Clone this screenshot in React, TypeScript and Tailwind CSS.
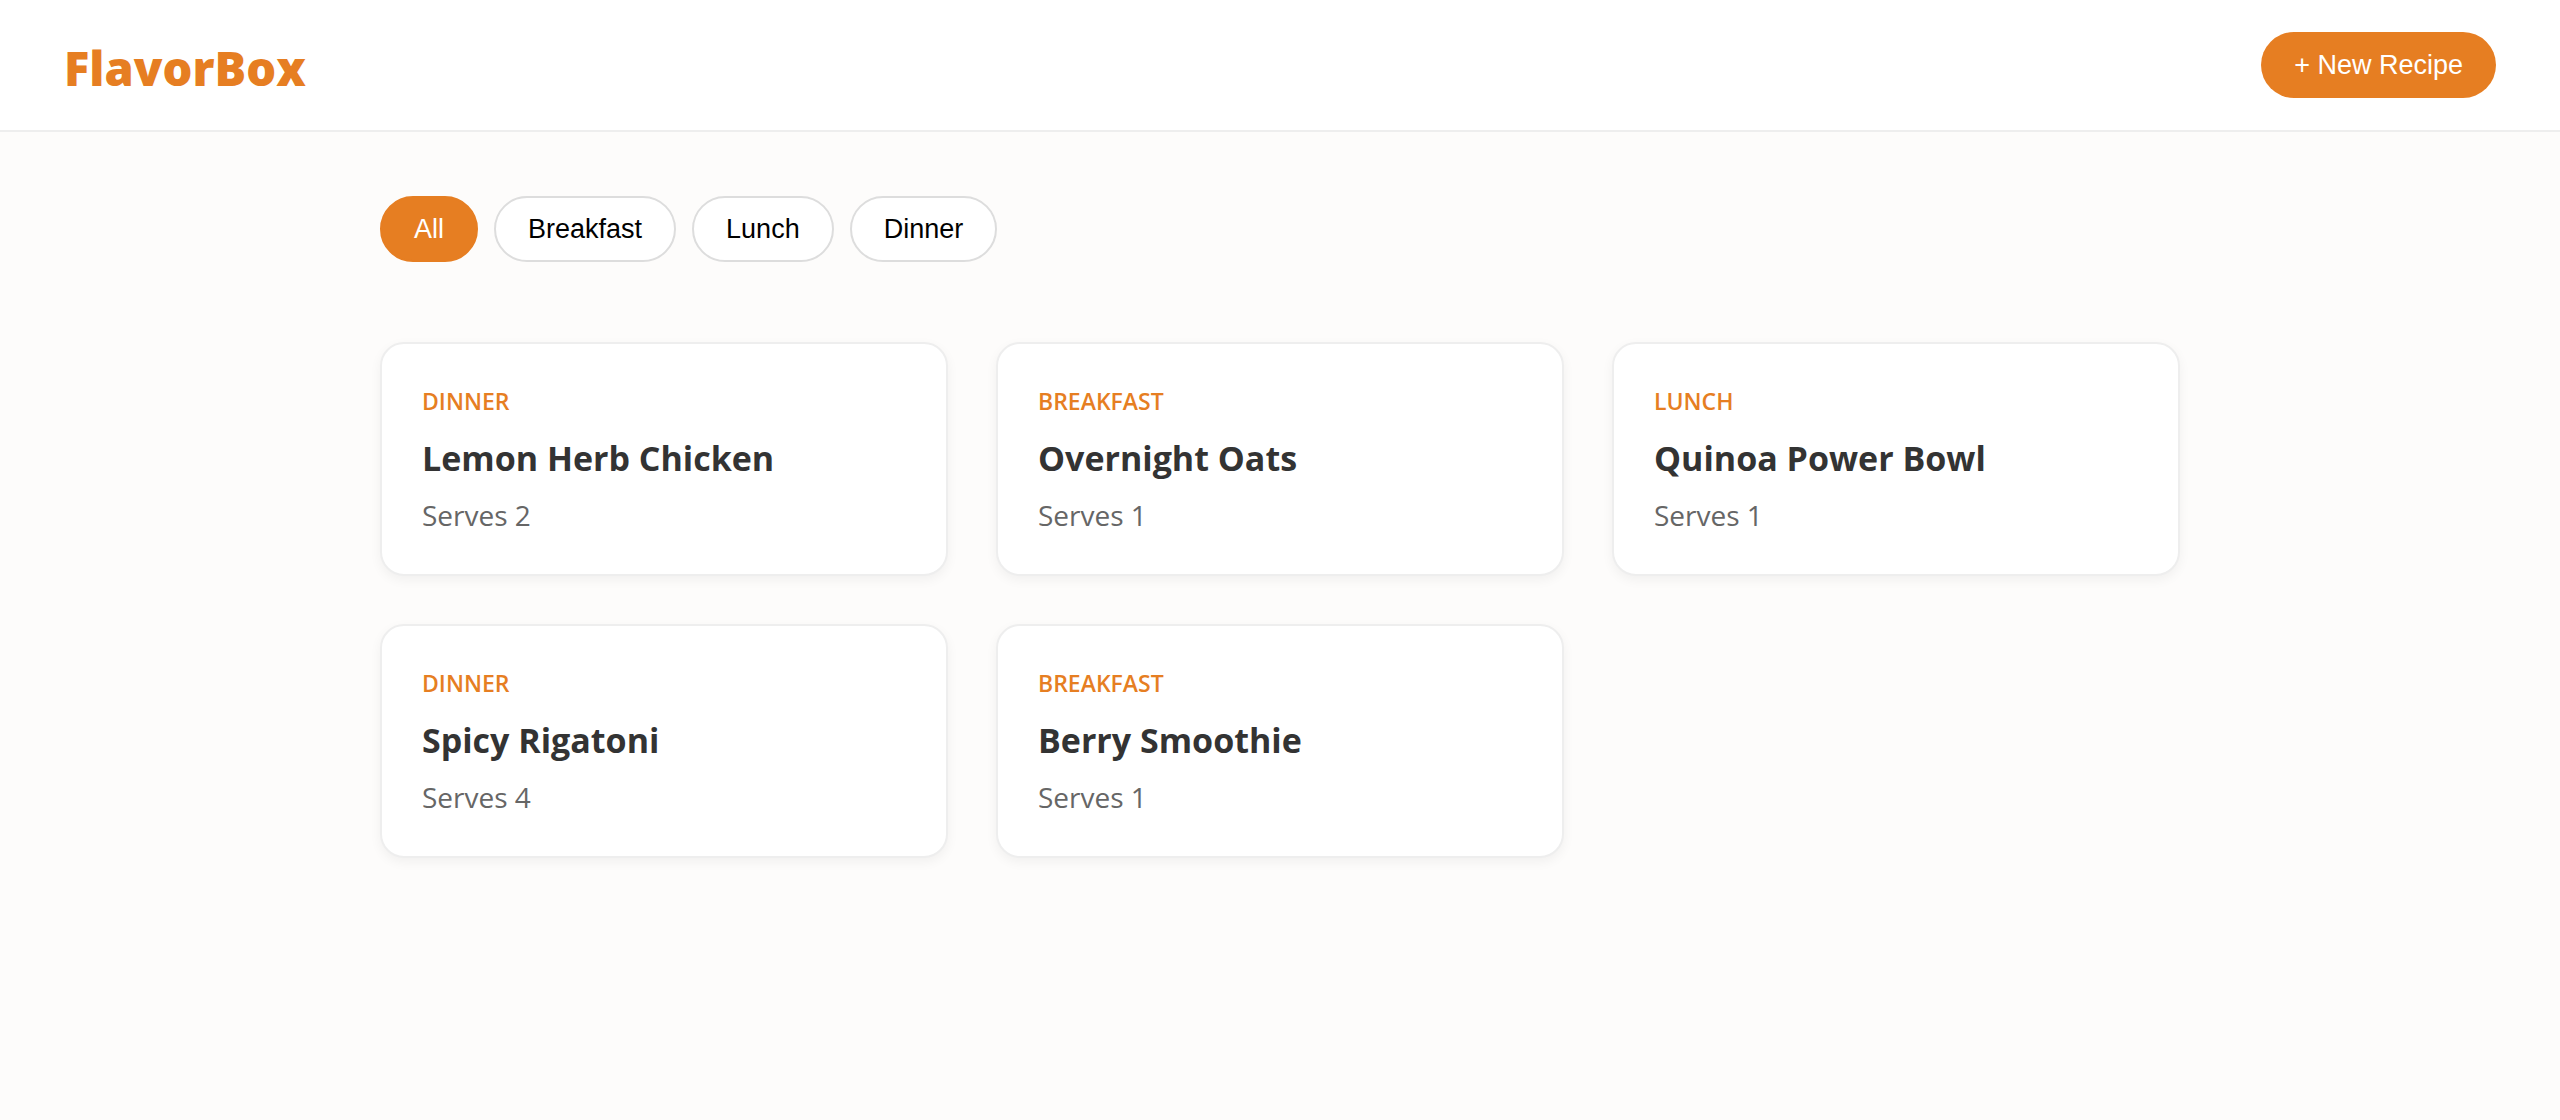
import React, { useState } from "react";

type Category = "Breakfast" | "Lunch" | "Dinner";

type Recipe = {
  id: number;
  title: string;
  category: Category;
  serves: number;
};

const FILTERS: ("All" | Category)[] = ["All", "Breakfast", "Lunch", "Dinner"];

const RECIPES: Recipe[] = [
  { id: 1, title: "Lemon Herb Chicken", category: "Dinner", serves: 2 },
  { id: 2, title: "Overnight Oats", category: "Breakfast", serves: 1 },
  { id: 3, title: "Quinoa Power Bowl", category: "Lunch", serves: 1 },
  { id: 4, title: "Spicy Rigatoni", category: "Dinner", serves: 4 },
  { id: 5, title: "Berry Smoothie", category: "Breakfast", serves: 1 },
];

function RecipeCard({ recipe }: { recipe: Recipe }) {
  return (
    <article className="rounded-3xl border-2 border-[#eeeeee] bg-white p-10 shadow-[0_4px_12px_rgba(0,0,0,0.05)]">
      <p className="text-[23px] leading-[34px] font-semibold text-[#e67e22] uppercase">
        {recipe.category}
      </p>
      <h2 className="mt-4 text-[34px] leading-[48px] font-bold text-[#333333]">
        {recipe.title}
      </h2>
      <p className="mt-[14px] text-[28px] leading-[38px] text-[#666666]">
        Serves {recipe.serves}
      </p>
    </article>
  );
}

export default function App() {
  const [filter, setFilter] = useState<"All" | Category>("All");

  const visible =
    filter === "All" ? RECIPES : RECIPES.filter((r) => r.category === filter);

  return (
    <div className="min-h-screen bg-[#fdfcfb] font-['Open_Sans',sans-serif]">
      <header className="flex items-start justify-between border-b-2 border-[#eeeeee] bg-white px-16 pt-8 pb-[26px]">
        <h1 className="text-[47px] leading-[72px] font-extrabold text-[#e67e22]">
          FlavorBox
        </h1>
        <button
          type="button"
          className="rounded-full bg-[#e67e22] px-[33px] py-4 font-['Liberation_Sans',sans-serif] text-[27px] leading-[34px] text-white"
        >
          + New Recipe
        </button>
      </header>

      <main className="mx-auto max-w-[1800px] py-16">
        <div className="flex flex-wrap gap-4">
          {FILTERS.map((f) => (
            <button
              key={f}
              type="button"
              aria-pressed={filter === f}
              onClick={() => setFilter(f)}
              className={`rounded-full border-2 px-8 py-[14px] font-['Liberation_Sans',sans-serif] text-[27px] leading-[34px] ${
                filter === f
                  ? "border-[#e67e22] bg-[#e67e22] text-white"
                  : "border-[#dddddd] bg-white text-black"
              }`}
            >
              {f}
            </button>
          ))}
        </div>

        <div className="mt-20 grid grid-cols-1 gap-12 md:grid-cols-2 lg:grid-cols-3">
          {visible.map((r) => (
            <RecipeCard key={r.id} recipe={r} />
          ))}
        </div>
      </main>
    </div>
  );
}
